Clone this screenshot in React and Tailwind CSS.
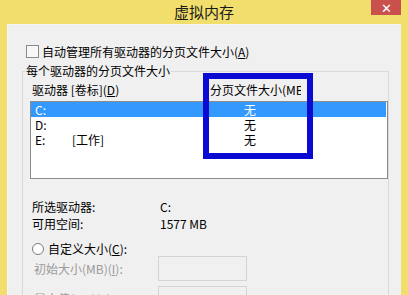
export default function App() {
  const font = { fontFamily: '"Noto Sans CJK SC", "Noto Sans", sans-serif' };
  return (
    <div
      className="relative w-[408px] h-[295px] overflow-hidden bg-[#f1de6c] flex flex-col text-[12px] leading-[14px] text-black"
      style={font}
    >
      {/* title bar */}
      <div className="relative h-[24px] shrink-0 flex items-center justify-center">
        <span className="text-[15px] leading-[18px] text-[#1a1a1a]">虚拟内存</span>
        <div className="absolute top-0 right-[7px] w-[30px] h-[15px] bg-[#c9504d] flex items-center justify-center text-white text-[13px] leading-none">
          ✕
        </div>
      </div>

      {/* client area */}
      <div className="flex-1 mx-[7px] bg-[#f0f0f0] border-t border-l border-[#f7f7f2] pt-[19px]">
        {/* checkbox row */}
        <div className="flex items-center h-[15px] pl-[18px]">
          <div className="w-[13px] h-[13px] border border-[#8a8a8a] bg-[#f7f7f7]" />
          <span className="ml-[3px]">自动管理所有驱动器的分页文件大小(<span className="underline">A</span>)</span>
        </div>

        {/* group box */}
        <fieldset className="mt-[5px] ml-[14px] w-[367px] border border-[#d9d9d9] pl-[7px] pb-[20px]">
          <legend className="ml-[-5px] px-[1px] leading-[14px]">每个驱动器的分页文件大小</legend>

          {/* header */}
          <div className="flex mt-[5px] h-[14px]">
            <div className="w-[180px] pl-[2px]">驱动器 [卷标](<span className="underline">D</span>)</div>
            <div className="w-[91px] overflow-hidden whitespace-nowrap">分页文件大小(MB)</div>
          </div>

          {/* list box */}
          <div className="mt-[4px] w-[358px] h-[78px] border border-[#8c8c8c] bg-white pr-[1px]">
            <div className="flex h-[15px] items-center bg-[#3399ff] text-white">
              <div className="w-[179px] pl-[4px]">C:</div>
              <div className="w-[80px] text-center">无</div>
            </div>
            <div className="flex h-[15px] items-center">
              <div className="w-[179px] pl-[4px]">D:</div>
              <div className="w-[80px] text-center">无</div>
            </div>
            <div className="flex h-[15px] items-center">
              <div className="w-[179px] pl-[4px] flex">
                <span className="w-[37px]">E:</span>
                <span>[工作]</span>
              </div>
              <div className="w-[80px] text-center">无</div>
            </div>
          </div>

          {/* drive info */}
          <div className="mt-[19px]">
            <div className="flex h-[17px] items-center">
              <div className="w-[130px] pl-[2px]">所选驱动器:</div>
              <div>C:</div>
            </div>
            <div className="flex h-[17px] items-center">
              <div className="w-[130px] pl-[2px]">可用空间:</div>
              <div>1577 MB</div>
            </div>
          </div>

          {/* custom size radio */}
          <div className="mt-[10px] flex h-[14px] items-center pl-[2px]">
            <div className="w-[12px] h-[12px] rounded-full border border-[#7a7a7a] bg-white" />
            <span className="ml-[4px]">自定义大小(<span className="underline">C</span>):</span>
          </div>

          <div className="flex h-[25px] items-center">
            <div className="w-[128px] pl-[4px] text-[#9a9a9a]">初始大小(MB)(<span className="underline">I</span>):</div>
            <div className="w-[89px] h-[25px] border border-[#d4d4d4] bg-[#f0f0f0]" />
          </div>
          <div className="mt-[5px] flex h-[25px] items-center">
            <div className="w-[128px] pl-[4px] text-[#9a9a9a]">最大值(MB)(<span className="underline">X</span>):</div>
            <div className="w-[89px] h-[25px] border border-[#d4d4d4] bg-[#f0f0f0]" />
          </div>
        </fieldset>
      </div>

      {/* blue annotation frame */}
      <div className="absolute left-[203px] top-[73px] w-[110px] h-[86px] border-[6px] border-[#0a0ad2] pointer-events-none" />
    </div>
  );
}
